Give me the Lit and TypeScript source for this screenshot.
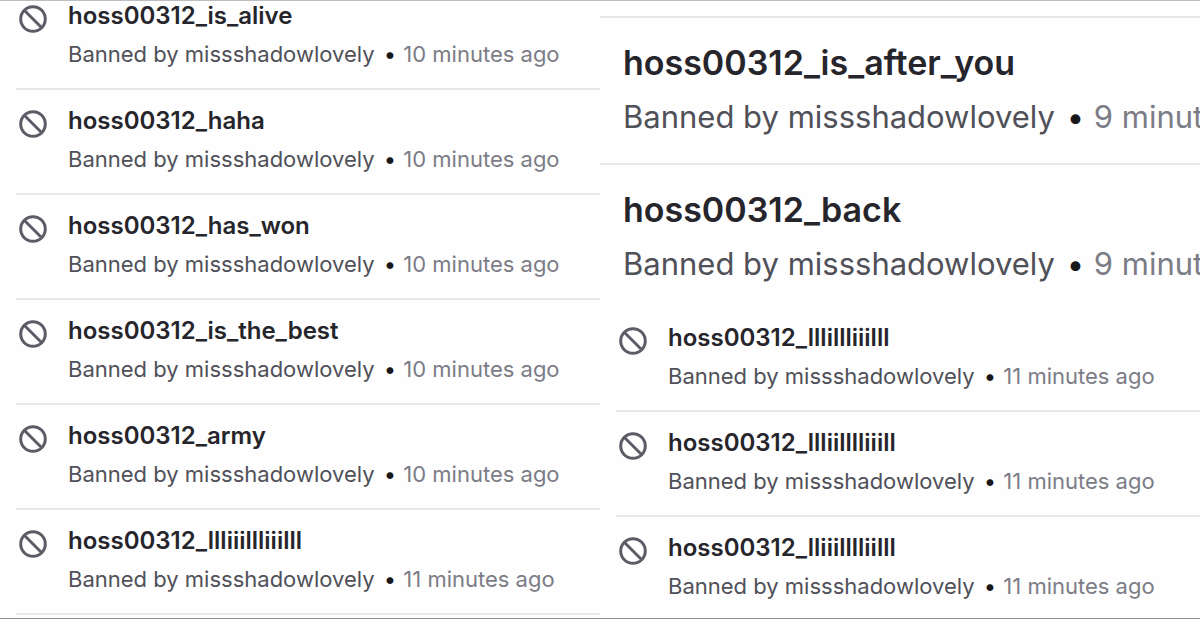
import { LitElement, html, css, svg } from "lit";
import { customElement, property } from "lit/decorators.js";

interface BanEntry {
  name: string;
  by: string;
  when: string;
}

const MODERATOR = "missshadowlovely";

const entry = (name: string, when: string): BanEntry => ({ name, by: MODERATOR, when });

const RECENT: BanEntry[] = [
  entry("hoss00312_is_alive", "10 minutes ago"),
  entry("hoss00312_haha", "10 minutes ago"),
  entry("hoss00312_has_won", "10 minutes ago"),
  entry("hoss00312_is_the_best", "10 minutes ago"),
  entry("hoss00312_army", "10 minutes ago"),
  entry("hoss00312_llliiillliiilll", "11 minutes ago"),
];

const ENLARGED: BanEntry[] = [
  entry("hoss00312_is_after_you", "9 minutes ago"),
  entry("hoss00312_back", "9 minutes ago"),
];

const OLDER: BanEntry[] = [
  entry("hoss00312_lllillliiilll", "11 minutes ago"),
  entry("hoss00312_llliilllliiill", "11 minutes ago"),
  entry("hoss00312_lliiilllliilll", "11 minutes ago"),
];

const banIcon = svg`
  <circle cx="14" cy="14" r="12.3"></circle>
  <path d="M5.5 5.5L22.5 22.5"></path>
`;

@customElement("ban-row")
export class BanRow extends LitElement {
  @property({ attribute: false }) entry!: BanEntry;
  @property({ type: Boolean, reflect: true }) large = false;

  static styles = css`
    :host {
      display: flex;
      box-sizing: border-box;
      height: 105px;
      margin-left: 16px;
      padding: 15px 0 0 3px;
      gap: 21px;
      border-bottom: 2px solid #e8e8ea;
      white-space: nowrap;
    }
    :host([large]) {
      height: 147px;
      margin-left: 0;
      padding: 23px 0 0 23px;
    }
    .icon {
      flex: none;
      width: 28px;
      height: 28px;
      margin-top: 5px;
      fill: none;
      stroke: #5c5b66;
      stroke-width: 3;
    }
    .name {
      font-size: 24px;
      line-height: 32px;
      font-weight: 600;
      color: #25252b;
    }
    .detail {
      margin-top: 6px;
      font-size: 22px;
      line-height: 32px;
      color: #505058;
    }
    .dot {
      margin: 0 1px 0 3px;
      color: #18181b;
    }
    .when {
      color: #7c7c86;
    }
    :host([large]) .name {
      font-size: 34px;
      line-height: 44px;
    }
    :host([large]) .detail {
      margin-top: 10px;
      font-size: 31px;
      line-height: 44px;
    }
  `;

  render() {
    return html`
      ${this.large
        ? null
        : html`<svg class="icon" viewBox="0 0 28 28" aria-hidden="true">${banIcon}</svg>`}
      <div>
        <div class="name">${this.entry.name}</div>
        <div class="detail">
          Banned by ${this.entry.by} <span class="dot">•</span>
          <span class="when">${this.entry.when}</span>
        </div>
      </div>
    `;
  }
}

@customElement("app-root")
export class AppRoot extends LitElement {
  static styles = css`
    :host {
      display: grid;
      grid-template-columns: 1fr 1fr;
      box-sizing: border-box;
      height: 100vh;
      overflow: hidden;
      background: #fefefe;
      border-top: 1px solid #bdbdbd;
      border-bottom: 1px solid #8c8c8c;
      font-family: Inter, "Liberation Sans", sans-serif;
    }
    .column {
      display: flex;
      flex-direction: column;
      min-width: 0;
      overflow: hidden;
    }
    .recent {
      justify-content: flex-end;
      padding-bottom: 3px;
    }
    .older {
      padding-top: 15px;
    }
    .column ban-row {
      flex: none;
    }
    .large-group {
      border-top: 2px solid #e8e8ea;
    }
    .large-group ban-row:last-child {
      height: 142px;
      border-bottom: none;
    }
  `;

  render() {
    return html`
      <section class="column recent">
        ${RECENT.map((e) => html`<ban-row .entry=${e}></ban-row>`)}
      </section>
      <section class="column older">
        <div class="large-group">
          ${ENLARGED.map((e) => html`<ban-row large .entry=${e}></ban-row>`)}
        </div>
        ${OLDER.map((e) => html`<ban-row .entry=${e}></ban-row>`)}
      </section>
    `;
  }
}
